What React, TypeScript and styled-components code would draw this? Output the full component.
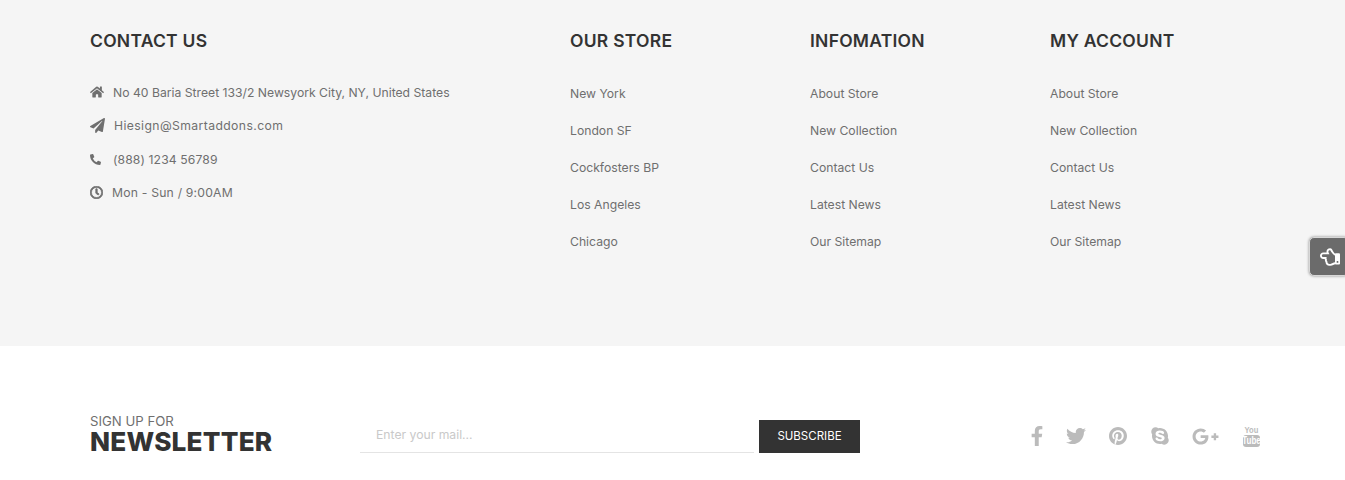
import React from "react";
import styled, { createGlobalStyle } from "styled-components";
import {
  FaHome,
  FaPaperPlane,
  FaPhoneAlt,
  FaRegClock,
  FaRegHandPointLeft,
  FaFacebookF,
  FaTwitter,
  FaPinterest,
  FaSkype,
  FaGooglePlusG,
} from "react-icons/fa";

const FONT = `Inter, "Open Sans", "Liberation Sans", sans-serif`;

const Global = createGlobalStyle`
  html, body { margin: 0; padding: 0; background: #fff; overflow: hidden; }
  body { font-family: ${FONT}; }
  * { box-sizing: border-box; }
`;

const Page = styled.div`
  position: relative;
  width: 1345px;
  height: 480px;
`;

const Top = styled.footer`
  height: 346px;
  background: #f5f5f5;
  padding: 30px 0 0 90px;
  display: grid;
  grid-template-columns: 480px 240px 240px 240px;
`;

const Heading = styled.h3`
  margin: 0 0 30px;
  font-size: 17.5px;
  line-height: 22px;
  font-weight: 600;
  color: #333;
  letter-spacing: 0.25px;
  text-transform: uppercase;
`;

const ContactList = styled.ul`
  list-style: none;
  margin: 0;
  padding: 0;
  display: flex;
  flex-direction: column;
  gap: 13.5px;
`;

const ContactItem = styled.li<{ $track?: number }>`
  display: flex;
  align-items: center;
  height: 20px;
  font-size: 12.2px;
  letter-spacing: ${(p) => p.$track ?? 0}px;
  color: #6f6f6f;
`;

const ContactIcon = styled.span<{ $w: number; $size?: number }>`
  display: inline-flex;
  align-items: center;
  width: ${(p) => p.$w}px;
  font-size: ${(p) => p.$size ?? 14}px;
  color: #6f6f6f;
  svg.thick {
    stroke: currentColor;
    stroke-width: 30;
  }
`;

const LinkList = styled.ul`
  list-style: none;
  margin: 0;
  padding: 2px 0 0;
  display: flex;
  flex-direction: column;
  gap: 17px;
`;

const LinkItem = styled.li`
  height: 20px;
  line-height: 20px;
  font-size: 12.2px;
  color: #6f6f6f;
`;

const Tab = styled.div`
  position: absolute;
  right: -4px;
  top: 237px;
  width: 40px;
  height: 39px;
  background: #6b6b6b;
  border: 1px solid #d8d8d8;
  border-radius: 5px;
  box-shadow: 0 0 3px rgba(0, 0, 0, 0.45);
  display: flex;
  align-items: center;
  padding-left: 10px;
  color: #fff;
  font-size: 20px;
`;

const Bottom = styled.section`
  height: 134px;
  padding: 0 85px 0 90px;
  display: flex;
  align-items: flex-start;
`;

const Signup = styled.div`
  width: 270px;
  padding-top: 67px;
`;

const SignupSmall = styled.div`
  font-size: 13.2px;
  line-height: 16px;
  color: #6f6f6f;
`;

const SignupBig = styled.div`
  font-size: 26.2px;
  line-height: 26px;
  font-weight: 800;
  color: #333;
  letter-spacing: 0.2px;
`;

const Form = styled.form`
  width: 500px;
  margin-top: 74px;
  display: flex;
  align-items: flex-start;
  gap: 5px;
`;

const MailInput = styled.input`
  width: 394px;
  height: 33px;
  border: 0;
  border-bottom: 1px solid #e4e4e4;
  outline: 0;
  padding: 0 16px 4px;
  background: transparent;
  font-family: ${FONT};
  font-size: 12.2px;
  &::placeholder {
    color: #c9c9c9;
    opacity: 1;
  }
`;

const Subscribe = styled.button`
  width: 101px;
  height: 33px;
  border: 0;
  padding: 0 0 1px;
  background: #333;
  color: #fff;
  font-family: ${FONT};
  font-size: 11.5px;
  font-weight: 400;
`;

const Social = styled.div`
  margin-left: auto;
  margin-top: 79px;
  display: flex;
  align-items: center;
  height: 22px;
  color: #bbb;
  font-size: 20px;
`;

const SocialLink = styled.a<{ $w: number; $gap?: number; $size?: number }>`
  display: inline-flex;
  justify-content: center;
  align-items: center;
  width: ${(p) => p.$w}px;
  margin-left: ${(p) => p.$gap ?? 0}px;
  font-size: ${(p) => p.$size ?? 20}px;
`;

const YouTube = () => (
  <svg width="17" height="22" viewBox="0 0 17 22" fill="#bbb">
    <text x="8.5" y="8" textAnchor="middle" fontSize="9.5" fontWeight="700" fontFamily="'Liberation Sans',sans-serif" transform="translate(1.7 0) scale(.8 1)">You</text>
    <rect x="0" y="10" width="17" height="12" rx="3" />
    <text x="8.5" y="19.5" textAnchor="middle" fontSize="10" fontWeight="700" fill="#fff" fontFamily="'Liberation Sans',sans-serif" transform="translate(1.7 0) scale(.8 1)">Tube</text>
  </svg>
);

const store = ["New York", "London SF", "Cockfosters BP", "Los Angeles", "Chicago"];
const info = ["About Store", "New Collection", "Contact Us", "Latest News", "Our Sitemap"];

const Column = ({ title, links }: { title: string; links: string[] }) => (
  <div>
    <Heading>{title}</Heading>
    <LinkList>
      {links.map((l) => (
        <LinkItem key={l}>{l}</LinkItem>
      ))}
    </LinkList>
  </div>
);

export default function App() {
  return (
    <Page>
      <Global />
      <Top>
        <div>
          <Heading>Contact Us</Heading>
          <ContactList>
            <ContactItem>
              <ContactIcon $w={23}><FaHome /></ContactIcon>
              No 40 Baria Street 133/2 Newsyork City, NY, United States
            </ContactItem>
            <ContactItem $track={0.39}>
              <ContactIcon $w={24} $size={15}><FaPaperPlane /></ContactIcon>
              Hiesign@Smartaddons.com
            </ContactItem>
            <ContactItem $track={0.1}>
              <ContactIcon $w={23} $size={11}><FaPhoneAlt /></ContactIcon>
              (888) 1234 56789
            </ContactItem>
            <ContactItem $track={0.2}>
              <ContactIcon $w={22} $size={13}><FaRegClock className="thick" /></ContactIcon>
              Mon - Sun / 9:00AM
            </ContactItem>
          </ContactList>
        </div>
        <Column title="Our Store" links={store} />
        <Column title="Infomation" links={info} />
        <Column title="My Account" links={info} />
      </Top>
      <Tab><FaRegHandPointLeft /></Tab>
      <Bottom>
        <Signup>
          <SignupSmall>SIGN UP FOR</SignupSmall>
          <SignupBig>NEWSLETTER</SignupBig>
        </Signup>
        <Form onSubmit={(e) => e.preventDefault()}>
          <MailInput placeholder="Enter your mail..." />
          <Subscribe type="button">SUBSCRIBE</Subscribe>
        </Form>
        <Social>
          <SocialLink $w={14}><FaFacebookF /></SocialLink>
          <SocialLink $w={20} $gap={22}><FaTwitter /></SocialLink>
          <SocialLink $w={18} $gap={23}><FaPinterest /></SocialLink>
          <SocialLink $w={18} $gap={24}><FaSkype /></SocialLink>
          <SocialLink $w={27} $gap={23} $size={27}><FaGooglePlusG /></SocialLink>
          <SocialLink $w={17} $gap={24}><YouTube /></SocialLink>
        </Social>
      </Bottom>
    </Page>
  );
}
